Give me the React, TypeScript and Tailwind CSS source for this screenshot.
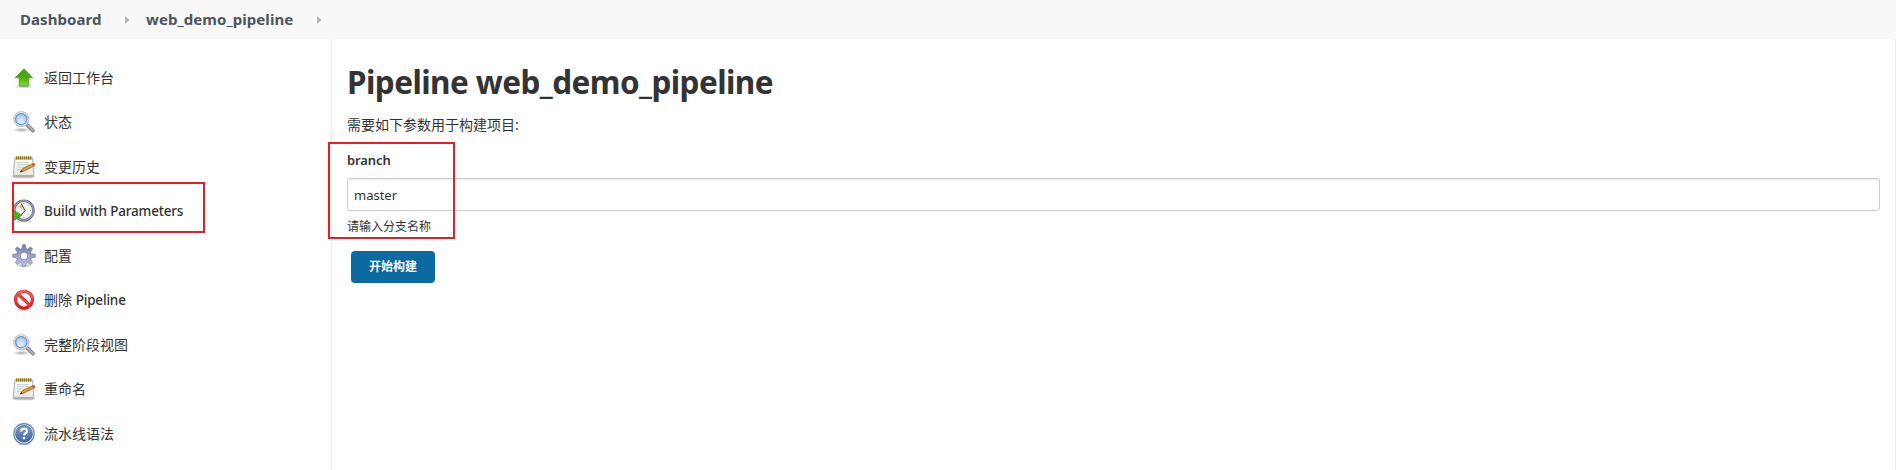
import type { ReactNode } from "react";

function Icon({ children }: { children: ReactNode }) {
  return (
    <svg viewBox="0 0 24 24" className="h-6 w-6 shrink-0">
      {children}
    </svg>
  );
}

function Gradients() {
  return (
    <svg className="absolute h-0 w-0" aria-hidden="true">
      <defs>
        <linearGradient id="green" x1="0" y1="0" x2="0" y2="1">
          <stop offset="0" stopColor="#4a9a14" />
          <stop offset="0.5" stopColor="#4fa817" />
          <stop offset="1" stopColor="#7be32a" />
        </linearGradient>
        <radialGradient id="lens" cx="0.45" cy="0.7" r="0.7">
          <stop offset="0" stopColor="#e4effb" />
          <stop offset="1" stopColor="#9dbfe6" />
        </radialGradient>
        <linearGradient id="paper" x1="0" y1="0" x2="0" y2="1">
          <stop offset="0" stopColor="#ffffff" />
          <stop offset="1" stopColor="#e4e4e2" />
        </linearGradient>
        <linearGradient id="gear" x1="0" y1="0" x2="0" y2="1">
          <stop offset="0" stopColor="#7080a8" />
          <stop offset="1" stopColor="#c0c4e4" />
        </linearGradient>
        <linearGradient id="red" x1="0" y1="0" x2="0" y2="1">
          <stop offset="0" stopColor="#f06666" />
          <stop offset="1" stopColor="#dd1c1c" />
        </linearGradient>
        <linearGradient id="blue" x1="0" y1="0" x2="0" y2="1">
          <stop offset="0" stopColor="#7d9fcb" />
          <stop offset="1" stopColor="#4068a4" />
        </linearGradient>
        <radialGradient id="shade">
          <stop offset="0" stopColor="#000" stopOpacity="0.35" />
          <stop offset="1" stopColor="#000" stopOpacity="0" />
        </radialGradient>
      </defs>
    </svg>
  );
}

function UpArrow() {
  return (
    <Icon>
      <ellipse cx="12" cy="20.5" rx="10" ry="2.2" fill="url(#shade)" />
      <path d="M12 2.8 20.6 11.8H16.8V19.8H7.2V11.8H3.2Z" fill="url(#green)" stroke="#479a17" strokeWidth="0.8" strokeLinejoin="round" />
    </Icon>
  );
}

function Magnifier() {
  return (
    <Icon>
      <ellipse cx="9.5" cy="20" rx="9" ry="2.3" fill="url(#shade)" />
      <path d="m14.8 14.6 6.2 6" stroke="#777" strokeWidth="3.6" strokeLinecap="round" />
      <path d="m15 14.8 5.8 5.6" stroke="#b4b4b4" strokeWidth="2" strokeLinecap="round" />
      <circle cx="9.3" cy="9.2" r="7.5" fill="#f4f4f4" stroke="#a8aba8" strokeWidth="0.9" />
      <circle cx="9.3" cy="9.2" r="5.7" fill="url(#lens)" stroke="#5f8dcb" strokeWidth="1.1" />
    </Icon>
  );
}

function Notepad() {
  return (
    <Icon>
      <rect x="3" y="22" width="17" height="1.5" rx="0.7" fill="#000" opacity="0.12" />
      <path d="M3 3.2H20.6L21.8 20V22H1.2V20Z" fill="url(#paper)" stroke="#a6a6a3" strokeWidth="0.9" strokeLinejoin="round" />
      <path d="M1.7 20.9H21.3" stroke="#a6a6a3" strokeWidth="1.6" />
      <path d="M3.6 1.6H20.2V4.6H3.6Z" fill="#cdb43e" />
      <path d="M4.5 1.3v3.2M6.5 1.3v3.2M8.5 1.3v3.2M10.5 1.3v3.2M12.5 1.3v3.2M14.5 1.3v3.2M16.5 1.3v3.2M18.5 1.3v3.2" stroke="#85721a" strokeWidth="0.9" />
      <path d="M5 7.5h12M5 9.5h12M5 12h7M5 14.5h4" stroke="#c9c9c7" strokeWidth="0.9" />
      <path d="M8.2 17 10.6 13.6 20.6 8.7 21.9 11 12 16.2Z" fill="#dca03c" stroke="#8c5d16" strokeWidth="0.7" strokeLinejoin="round" />
      <path d="m7.8 17.2 1.5-2.1 1.4 1.5Z" fill="#333" />
      <path d="m20.2 8.9 1.6-.8q1.9.3 1.4 2.2l-1.7 1Z" fill="#e8432f" />
    </Icon>
  );
}

function ClockRun() {
  return (
    <Icon>
      <ellipse cx="12" cy="22" rx="10" ry="1.8" fill="url(#shade)" />
      <circle cx="11.8" cy="11.5" r="9.7" fill="#f0f1ed" stroke="#6a6c89" strokeWidth="2.6" />
      <circle cx="11.8" cy="11.5" r="9.7" fill="none" stroke="#a9abc6" strokeWidth="1" />
      <path d="M10.5 10.3 5.8 7.6 10 4.6Z" fill="#e9c75b" />
      <path d="M9.2 4.5 13 11.7 9.2 15.8" fill="none" stroke="#3d3d3d" strokeWidth="1" />
      <path d="M11.8 4v1M19 11.5h-1M11.8 19v-1M17 6.3l-.6.6M17 16.7l-.6-.6" stroke="#888" strokeWidth="0.8" />
      <path d="M.5 10.5 9.6 16.5.5 22.5Z" fill="#45b41c" stroke="#2e8710" strokeWidth="0.7" />
    </Icon>
  );
}

function Gear() {
  return (
    <Icon>
      <ellipse cx="12" cy="21.5" rx="9" ry="2" fill="url(#shade)" />
      <path
        fillRule="evenodd"
        d="M10.6.7h2.8l.6 3.8 1.6.7 3-2.2 2 2-2.100 3.100.8 1.600 4 .6v2.900l-3.900.7-.8 1.600 2.100 3-2.100 2.100-3-2.200-1.600.8-.7 3.500h-2.700l-.6-3.500-1.700-.8-3 2.200-2-2.100 2.100-3-.8-1.600L.7 13.200v-2.900l3.900-.6.8-1.600-2.200-3.100 2-2 3.100 2.200 1.600-.7ZM12 8.300a3.700 3.700 0 1 0 0 7.400 3.700 3.700 0 0 0 0-7.400Z"
        fill="url(#gear)"
        stroke="#777b9e"
        strokeWidth="0.7"
        strokeLinejoin="round"
      />
    </Icon>
  );
}

function Forbidden() {
  return (
    <Icon>
      <ellipse cx="12" cy="21.5" rx="8" ry="1.8" fill="url(#shade)" />
      <circle cx="12" cy="11.7" r="8.5" fill="#f8f4f2" stroke="#c41818" strokeWidth="3.1" />
      <path d="m6 6 12 11.4" stroke="#c41818" strokeWidth="3.1" />
      <circle cx="12" cy="11.7" r="8.5" fill="none" stroke="url(#red)" strokeWidth="2.2" />
      <path d="m6 6 12 11.4" stroke="#e84545" strokeWidth="2.2" />
    </Icon>
  );
}

function Help() {
  return (
    <Icon>
      <ellipse cx="12" cy="22" rx="8" ry="1.6" fill="url(#shade)" />
      <circle cx="12" cy="11.8" r="10.2" fill="#f3f6fa" stroke="#5a7fb4" strokeWidth="1.1" />
      <circle cx="12" cy="11.8" r="8.4" fill="url(#blue)" stroke="#3d659f" strokeWidth="0.8" />
      <path d="M9 9.400q0-2.600 3-2.600t3 2.300q0 1.500-1.500 2.300-1.400.7-1.400 1.900" fill="none" stroke="#fff" strokeWidth="2.3" />
      <circle cx="12" cy="16.1" r="1.4" fill="#fff" />
    </Icon>
  );
}

function Separator() {
  return (
    <svg viewBox="0 0 5 8" className="h-2 w-[5px] shrink-0">
      <path d="M0 0 4.5 4 0 8Z" fill="#b5b5b5" />
    </svg>
  );
}

type Task = { label?: string; latin?: string; icon: () => ReactNode };

const tasks: Task[] = [
  { label: "返回工作台", icon: UpArrow },
  { label: "状态", icon: Magnifier },
  { label: "变更历史", icon: Notepad },
  { latin: "Build with Parameters", icon: ClockRun },
  { label: "配置", icon: Gear },
  { label: "删除 ", latin: "Pipeline", icon: Forbidden },
  { label: "完整阶段视图", icon: Magnifier },
  { label: "重命名", icon: Notepad },
  { label: "流水线语法", icon: Help },
];

export default function App() {
  return (
    <div className="relative flex h-[470px] w-full flex-col overflow-hidden bg-white font-['Noto_Sans','Noto_Sans_CJK_SC',sans-serif] text-sm text-[#333]">
      <Gradients />
      <header className="flex h-[39px] shrink-0 items-center bg-[#f8f8f8] pl-5 text-[15px] font-bold tracking-[0.07px] text-[#4d545d]">
        <a className="w-[105px]">Dashboard</a>
        <Separator />
        <a className="ml-4 w-[171px]">web_demo_pipeline</a>
        <Separator />
      </header>
      <div className="flex min-h-0 flex-1">
        <nav className="flex w-[332px] shrink-0 flex-col border-r border-[#ebebeb] pt-[16.5px] pl-3">
          {tasks.map(({ label, latin, icon: TaskIcon }, index) => (
            <a key={index} className="flex h-[44.5px] shrink-0 items-center gap-2">
              <TaskIcon />
              <span className="whitespace-pre">
                {label}
                {latin && <span className="text-[13.5px] font-medium tracking-[-0.18px]">{latin}</span>}
              </span>
            </a>
          ))}
        </nav>
        <main className="flex flex-1 flex-col items-start border-r border-[#ebebeb] pr-[15px] pl-[15px]">
          <h1 className="mt-[23px] text-[31.5px] leading-10 font-bold tracking-[-0.57px]">Pipeline web_demo_pipeline</h1>
          <p className="mt-[13px] leading-5">需要如下参数用于构建项目:</p>
          <label className="mt-[15px] text-[13px] leading-5 font-semibold tracking-[-0.1px]">branch</label>
          <input
            className="mt-2 h-[33px] w-full rounded-[3px] border border-[#ccc] px-1.5 text-[13px] shadow-[inset_0_1px_1px_rgba(0,0,0,0.075)] outline-none"
            defaultValue="master"
          />
          <p className="mt-[6px] text-xs leading-5">请输入分支名称</p>
          <button className="mt-[14px] ml-1 h-8 w-[84px] rounded-[4px] bg-[#0b6aa2] text-xs font-bold text-white">开始构建</button>
        </main>
      </div>
      <div className="absolute top-[182px] left-3 h-[51px] w-[193px] border-2 border-[#ed1c24]" />
      <div className="absolute top-[142px] left-[328px] h-[97px] w-[127px] border-2 border-[#ed1c24]" />
    </div>
  );
}
